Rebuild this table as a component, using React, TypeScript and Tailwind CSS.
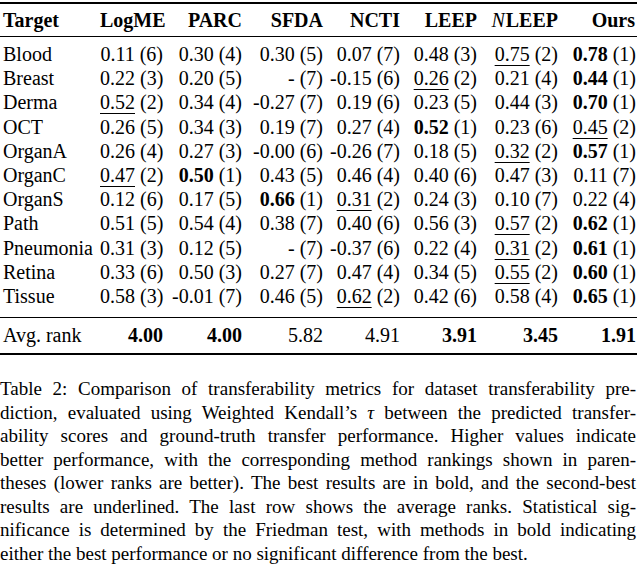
import React from "react";

type Cell = { v: string; r: string; b?: boolean; u?: boolean };

const c = (v: string, r: string, flag?: "b" | "u"): Cell => ({ v, r, b: flag === "b", u: flag === "u" });

const rows: { name: string; cells: Cell[] }[] = [
  { name: "Blood", cells: [c("0.11", "6"), c("0.30", "4"), c("0.30", "5"), c("0.07", "7"), c("0.48", "3"), c("0.75", "2", "u"), c("0.78", "1", "b")] },
  { name: "Breast", cells: [c("0.22", "3"), c("0.20", "5"), c("-", "7"), c("-0.15", "6"), c("0.26", "2", "u"), c("0.21", "4"), c("0.44", "1", "b")] },
  { name: "Derma", cells: [c("0.52", "2", "u"), c("0.34", "4"), c("-0.27", "7"), c("0.19", "6"), c("0.23", "5"), c("0.44", "3"), c("0.70", "1", "b")] },
  { name: "OCT", cells: [c("0.26", "5"), c("0.34", "3"), c("0.19", "7"), c("0.27", "4"), c("0.52", "1", "b"), c("0.23", "6"), c("0.45", "2", "u")] },
  { name: "OrganA", cells: [c("0.26", "4"), c("0.27", "3"), c("-0.00", "6"), c("-0.26", "7"), c("0.18", "5"), c("0.32", "2", "u"), c("0.57", "1", "b")] },
  { name: "OrganC", cells: [c("0.47", "2", "u"), c("0.50", "1", "b"), c("0.43", "5"), c("0.46", "4"), c("0.40", "6"), c("0.47", "3"), c("0.11", "7")] },
  { name: "OrganS", cells: [c("0.12", "6"), c("0.17", "5"), c("0.66", "1", "b"), c("0.31", "2", "u"), c("0.24", "3"), c("0.10", "7"), c("0.22", "4")] },
  { name: "Path", cells: [c("0.51", "5"), c("0.54", "4"), c("0.38", "7"), c("0.40", "6"), c("0.56", "3"), c("0.57", "2", "u"), c("0.62", "1", "b")] },
  { name: "Pneumonia", cells: [c("0.31", "3"), c("0.12", "5"), c("-", "7"), c("-0.37", "6"), c("0.22", "4"), c("0.31", "2", "u"), c("0.61", "1", "b")] },
  { name: "Retina", cells: [c("0.33", "6"), c("0.50", "3"), c("0.27", "7"), c("0.47", "4"), c("0.34", "5"), c("0.55", "2", "u"), c("0.60", "1", "b")] },
  { name: "Tissue", cells: [c("0.58", "3"), c("-0.01", "7"), c("0.46", "5"), c("0.62", "2", "u"), c("0.42", "6"), c("0.58", "4"), c("0.65", "1", "b")] },
];

const avg = [
  { v: "4.00", b: true },
  { v: "4.00", b: true },
  { v: "5.82", b: false },
  { v: "4.91", b: false },
  { v: "3.91", b: true },
  { v: "3.45", b: true },
  { v: "1.91", b: true },
];

const grid = "grid grid-cols-[100px_63px_79px_81px_77px_77px_81px_78px] whitespace-nowrap";

const captionLines = [
  "Table 2:  Comparison of transferability metrics for dataset transferability pre-",
  null,
  "ability scores and ground-truth transfer performance.  Higher values indicate",
  "better performance, with the corresponding method rankings shown in paren-",
  "theses (lower ranks are better). The best results are in bold, and the second-best",
  "results are underlined.  The last row shows the average ranks.  Statistical sig-",
  "nificance is determined by the Friedman test, with methods in bold indicating",
];

export default function App() {
  return (
    <div className="w-[640px] h-[568px] bg-white text-black overflow-hidden font-['Liberation_Serif','Times_New_Roman',serif]">
      <div className="w-[637px] mt-[2px] border-t-2 border-black text-[20px]">
        {/* header */}
        <div className={`${grid} pt-[4px] pb-[4px] leading-[24px] font-bold border-b border-black`}>
          <div className="pl-[3px]">Target</div>
          <div className="text-right">LogME</div>
          <div className="text-right">PARC</div>
          <div className="text-right">SFDA</div>
          <div className="text-right">NCTI</div>
          <div className="text-right">LEEP</div>
          <div className="text-right">
            <span className="italic font-normal mr-[1px]">N</span>LEEP
          </div>
          <div className="text-right pr-[1px]">Ours</div>
        </div>

        <div className="pt-[5px] pb-[9px] border-b border-black">
          {rows.map((row) => (
            <div key={row.name} className={`${grid} leading-[24.2px]`}>
              <div className="pl-[3px]">{row.name}</div>
              {row.cells.map((cell, i) => (
                <div key={i} className="text-right">
                  <span
                    className={`${cell.b ? "font-bold" : ""} ${
                      cell.u ? "underline decoration-1 underline-offset-[4px]" : ""
                    }`}
                  >
                    {cell.v}
                  </span>{" "}
                  ({cell.r})
                </div>
              ))}
            </div>
          ))}
        </div>

        <div className={`${grid} pt-[5px] pb-[6px] leading-[24px] border-b-2 border-black`}>
          <div className="pl-[3px]">Avg. rank</div>
          {avg.map((a, i) => (
            <div key={i} className={`text-right ${a.b ? "font-bold" : ""}`}>
              {a.v}
            </div>
          ))}
        </div>
      </div>

      <div className="w-[636px] mt-[22px] text-[19px] leading-[23.5px]">
        {captionLines.map((line, i) => (
          <div key={i} className="text-justify [text-align-last:justify]">
            {line ?? (
              <>
                diction, evaluated using Weighted Kendall’s <span className="italic">τ</span> between the predicted transfer-
              </>
            )}
          </div>
        ))}
        <div>either the best performance or no significant difference from the best.</div>
      </div>
    </div>
  );
}
